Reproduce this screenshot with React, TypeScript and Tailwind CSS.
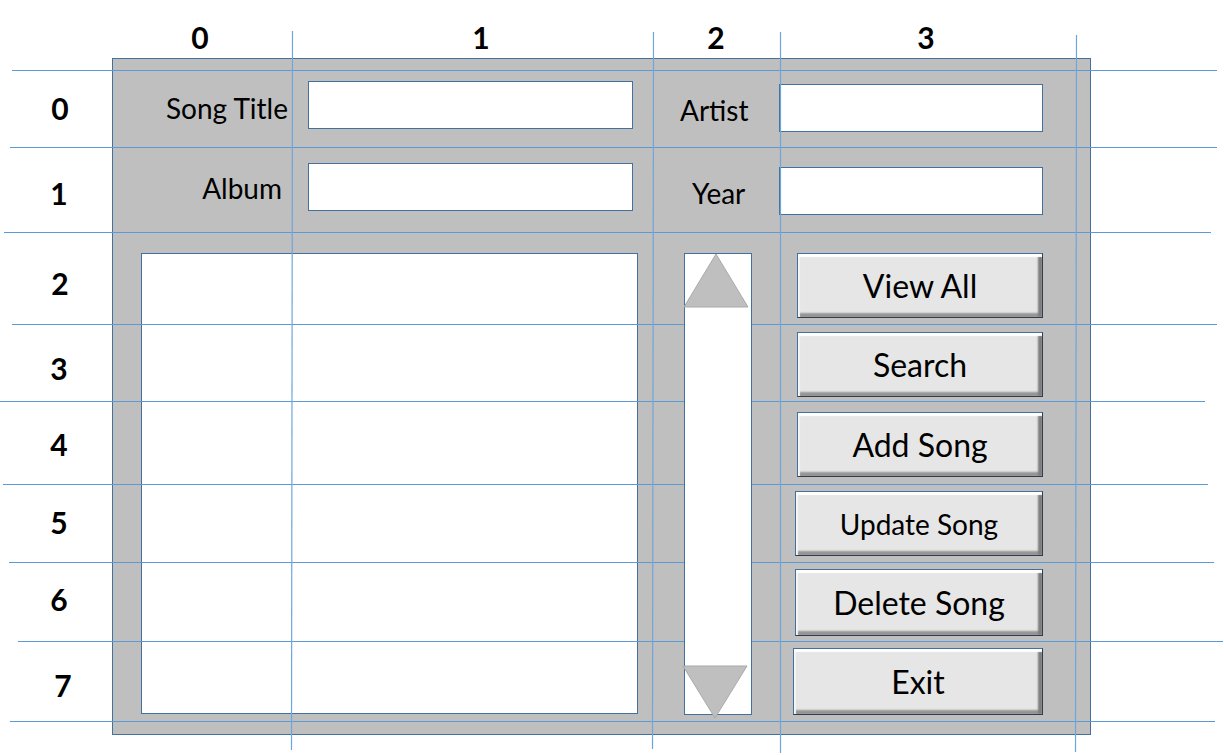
import React from 'react';

const font = { fontFamily: 'Lato, "Open Sans", sans-serif' };

const rowLabels = [
  { n: '0', h: 'h-[84px]', pl: 'pl-[8px]' },
  { n: '1', h: 'h-[86px]', pl: 'pl-[6px]' },
  { n: '2', h: 'h-[94px]', pl: 'pl-[8px]' },
  { n: '3', h: 'h-[76px]', pl: 'pl-[6px]' },
  { n: '4', h: 'h-[76px]', pl: 'pl-[6px]' },
  { n: '5', h: 'h-[80px]', pl: 'pl-[6px]' },
  { n: '6', h: 'h-[74px]', pl: 'pl-[6px]' },
  { n: '7', h: 'h-[98px]', pl: 'pl-[14px]' },
];

const colLabels = [
  { n: '0', w: 'w-[176px]' },
  { n: '1', w: 'w-[386px]' },
  { n: '2', w: 'w-[84px]' },
  { n: '3', w: 'w-[336px]' },
];

// guide lines drawn over the mock-up
const hLines = [
  [12, 70, 1217], [10, 147, 1217], [4, 232, 1211], [12, 324, 1217],
  [0, 401, 1205], [3, 484, 1208], [9, 562, 1214], [18, 641, 1223], [10, 721, 1215],
];
const vLines = [
  [292, 31, 291, 750], [653, 32, 652, 749], [780, 32, 780, 753], [1076, 35, 1075, 752],
];

function BevelButton({ label, className }: { label: string; className: string }) {
  return (
    <button
      className={
        'flex items-center justify-center border border-[#41719c] border-r-[#2c3e50] border-b-[#2c3e50] bg-[#e6e6e6] text-black ' +
        'shadow-[inset_0_3px_1px_#ffffff,inset_2px_0_1px_#f6f6f6,inset_-4px_0_2px_#7d7d7d,inset_0_-4px_2px_#959595] ' +
        className
      }
    >
      {label}
    </button>
  );
}

export default function App() {
  return (
    <div className="relative w-[1224px] h-[755px] bg-white overflow-hidden text-black" style={font}>
      <div className="flex">
        {/* row numbers */}
        <div className="w-[112px] pt-[66px] flex flex-col">
          {rowLabels.map((r) => (
            <div key={r.n} className={`${r.h} ${r.pl} flex items-center justify-center text-[30px] font-bold`}>
              {r.n}
            </div>
          ))}
        </div>

        <div className="flex flex-col">
          {/* column numbers */}
          <div className="flex h-[58px] pt-[16px]">
            {colLabels.map((c) => (
              <div key={c.n} className={`${c.w} flex items-center justify-center text-[30px] font-bold`}>
                {c.n}
              </div>
            ))}
          </div>

          {/* form panel */}
          <div className="w-[979px] h-[677px] border border-[#41719c] bg-[#bfbfbf] flex flex-col">
            <div className="flex h-[88px]">
              <div className="w-[175px] pt-[9px] flex items-center justify-end text-[28px]">Song Title</div>
              <div className="ml-[20px] mt-[22px] w-[325px] h-[48px] bg-white border border-[#41719c]" />
              <div className="w-[146px] pl-[47px] pt-[13px] flex items-center text-[28px]">Artist</div>
              <div className="mt-[25px] w-[264px] h-[48px] bg-white border border-[#41719c]" />
            </div>
            <div className="flex h-[86px]">
              <div className="w-[175px] pr-[6px] pb-[4px] flex items-center justify-end text-[28px]">Album</div>
              <div className="ml-[20px] mt-[16px] w-[325px] h-[48px] bg-white border border-[#41719c]" />
              <div className="w-[146px] pl-[59px] pt-[6px] flex items-center text-[28px]">Year</div>
              <div className="mt-[20px] w-[264px] h-[48px] bg-white border border-[#41719c]" />
            </div>

            <div className="flex">
              <div className="ml-[28px] mt-[20px] w-[497px] h-[461px] bg-white border border-[#41719c]" />

              <div className="relative z-20 ml-[46px] mt-[20px] w-[68px] h-[462px] bg-white border border-[#41719c]">
                <svg className="absolute -left-[1px] -top-[1px] overflow-visible" width="68" height="466">
                  <polygon points="0,54 64,54 32,1" fill="#bfbfbf" stroke="#a9a9a9" strokeWidth="1" />
                  <polygon points="-1,413 63,413 31,465" fill="#bfbfbf" stroke="#a9a9a9" strokeWidth="1" />
                </svg>
              </div>

              <div className="ml-[45px] mt-[20px] flex flex-col">
                <BevelButton label="View All" className="w-[246px] h-[65px] text-[32px]" />
                <BevelButton label="Search" className="mt-[14px] w-[246px] h-[65px] text-[32px]" />
                <BevelButton label="Add Song" className="mt-[15px] w-[246px] h-[65px] text-[32px]" />
                <BevelButton label="Update Song" className="mt-[14px] -ml-[2px] w-[248px] h-[65px] text-[28px]" />
                <BevelButton label="Delete Song" className="mt-[13px] -ml-[2px] w-[248px] h-[67px] text-[32px]" />
                <BevelButton label="Exit" className="mt-[12px] -ml-[4px] w-[250px] h-[67px] text-[32px]" />
              </div>
            </div>
          </div>
        </div>
      </div>

      <svg className="absolute inset-0 z-10 pointer-events-none" width="1224" height="755">
        {hLines.map(([x1, y, x2], i) => (
          <line key={'h' + i} x1={x1} y1={y + 0.5} x2={x2} y2={y + 0.5} stroke="#5b9bd5" strokeWidth="1.2" />
        ))}
        {vLines.map(([x1, y1, x2, y2], i) => (
          <line key={'v' + i} x1={x1 + 0.5} y1={y1} x2={x2 + 0.5} y2={y2} stroke="#6fa6d9" strokeWidth="1.2" />
        ))}
      </svg>
    </div>
  );
}
